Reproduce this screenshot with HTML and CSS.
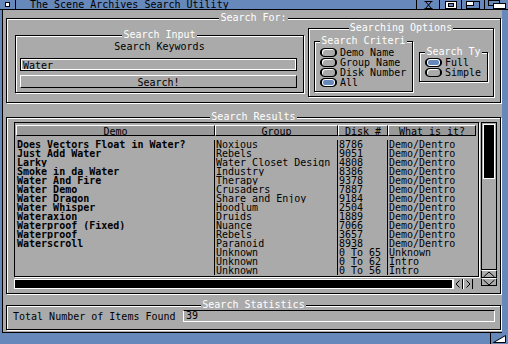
FILE: index.html
```html
<!DOCTYPE html>
<html>
<head>
<meta charset="utf-8">
<link rel="stylesheet" href="styles.css">
</head>
<body>
<div class="win">
  <div class="titlebar">
    <div class="close"><span class="closebox"></span></div>
    <div class="wtitle">The Scene Archives Search Utility</div>
    <div class="gad g1"><svg width="9" height="8" viewBox="0 0 9 8"><path d="M0.5 0.5H8.5M1.5 0.5L7.5 7.5M0.5 7.5H8.5M1.5 7.5L7.5 0.5" stroke="#000" fill="none"/></svg></div>
    <div class="gad g2"><svg width="12" height="8" viewBox="0 0 12 8"><rect x="0.5" y="0.5" width="11" height="7" fill="#fff" stroke="#000"/><rect x="3.5" y="2.5" width="5" height="3" fill="#6688bb" stroke="#000"/></svg></div>
    <div class="gad g3"><svg width="14" height="8" viewBox="0 0 14 8"><rect x="0.5" y="0.5" width="13" height="7" fill="#6688bb" stroke="#000"/><rect x="0.5" y="0.5" width="7" height="4" fill="#fff" stroke="#000"/></svg></div>
    <div class="gad g4"><svg width="18" height="9" viewBox="0 0 18 9"><rect x="0.5" y="0.5" width="11" height="5" fill="#6688bb" stroke="#000"/><rect x="5.5" y="3.5" width="12" height="5" fill="#fff" stroke="#000"/></svg></div>
  </div>
  <div class="body">
    <div class="content">
      <div class="grp g-for">
        <div class="ttl">Search For:</div>
        <div class="for-row">
          <div class="grp g-input">
            <div class="ttl">Search Input</div>
            <div class="label">Search Keywords</div>
            <div class="string">Water</div>
            <div class="button"><u>S</u>earch!</div>
          </div>
          <div class="grp g-opts">
            <div class="ttl">Searching Options</div>
            <div class="opts-row">
              <div class="grp g-crit">
                <div class="ttl">Search Criteri</div>
                <div class="radios">
                  <div class="ritem"><span class="radio"></span>Demo Name</div>
                  <div class="ritem"><span class="radio"></span>Group Name</div>
                  <div class="ritem"><span class="radio"></span>Disk Number</div>
                  <div class="ritem"><span class="radio on"></span>All</div>
                </div>
              </div>
              <div class="grp g-type">
                <div class="ttl">Search Ty</div>
                <div class="radios">
                  <div class="ritem"><span class="radio on"></span>Full</div>
                  <div class="ritem"><span class="radio"></span>Simple</div>
                </div>
              </div>
            </div>
          </div>
        </div>
      </div>

      <div class="grp g-res">
        <div class="ttl">Search Results</div>
        <div class="listwrap">
          <div class="listmain">
            <div class="lv">
              <div class="row hdr">
                <div class="c c1">Demo</div><div class="c c2">Group</div><div class="c c3">Disk #</div><div class="c c4">What is it?</div>
              </div>
              <div class="rows">
                <div class="row"><div class="c c1 b">Does Vectors Float in Water?</div><div class="c c2">Noxious</div><div class="c c3">8786</div><div class="c c4">Demo/Dentro</div></div>
                <div class="row"><div class="c c1 b">Just Add Water</div><div class="c c2">Rebels</div><div class="c c3">9051</div><div class="c c4">Demo/Dentro</div></div>
                <div class="row"><div class="c c1 b">Larky</div><div class="c c2">Water Closet Design</div><div class="c c3">4808</div><div class="c c4">Demo/Dentro</div></div>
                <div class="row"><div class="c c1 b">Smoke in da Water</div><div class="c c2">Industry</div><div class="c c3">8386</div><div class="c c4">Demo/Dentro</div></div>
                <div class="row"><div class="c c1 b">Water And Fire</div><div class="c c2">Therapy</div><div class="c c3">9378</div><div class="c c4">Demo/Dentro</div></div>
                <div class="row"><div class="c c1 b">Water Demo</div><div class="c c2">Crusaders</div><div class="c c3">7887</div><div class="c c4">Demo/Dentro</div></div>
                <div class="row"><div class="c c1 b">Water Dragon</div><div class="c c2">Share and Enjoy</div><div class="c c3">9184</div><div class="c c4">Demo/Dentro</div></div>
                <div class="row"><div class="c c1 b">Water Whisper</div><div class="c c2">Hoodlum</div><div class="c c3">2504</div><div class="c c4">Demo/Dentro</div></div>
                <div class="row"><div class="c c1 b">Wateraxion</div><div class="c c2">Druids</div><div class="c c3">1889</div><div class="c c4">Demo/Dentro</div></div>
                <div class="row"><div class="c c1 b">Waterproof (Fixed)</div><div class="c c2">Nuance</div><div class="c c3">7066</div><div class="c c4">Demo/Dentro</div></div>
                <div class="row"><div class="c c1 b">Waterproof</div><div class="c c2">Rebels</div><div class="c c3">3657</div><div class="c c4">Demo/Dentro</div></div>
                <div class="row"><div class="c c1 b">Waterscroll</div><div class="c c2">Paranoid</div><div class="c c3">8938</div><div class="c c4">Demo/Dentro</div></div>
                <div class="row"><div class="c c1 b"></div><div class="c c2">Unknown</div><div class="c c3">0 To 65</div><div class="c c4">Unknown</div></div>
                <div class="row"><div class="c c1 b"></div><div class="c c2">Unknown</div><div class="c c3">0 To 62</div><div class="c c4">Intro</div></div>
                <div class="row"><div class="c c1 b"></div><div class="c c2">Unknown</div><div class="c c3">0 To 56</div><div class="c c4">Intro</div></div>
              </div>
            </div>
            <div class="hscroll">
              <div class="hbar"></div>
              <div class="arrbtn"><svg width="8" height="8" viewBox="0 0 8 8"><path d="M5.5 0.5L2 4L5.5 7.5" stroke="#000" fill="none"/></svg></div>
              <div class="arrbtn"><svg width="8" height="8" viewBox="0 0 8 8"><path d="M2.5 0.5L6 4L2.5 7.5" stroke="#000" fill="none"/></svg></div>
            </div>
          </div>
          <div class="vside">
            <div class="vscroll"><div class="vknob"></div></div>
            <div class="varr"><svg width="12" height="7" viewBox="0 0 12 7"><path d="M0.5 6L6 1L11.5 6" stroke="#000" fill="none"/></svg></div>
            <div class="varr"><svg width="12" height="7" viewBox="0 0 12 7"><path d="M0.5 1L6 6L11.5 1" stroke="#000" fill="none"/></svg></div>
          </div>
        </div>
      </div>

      <div class="grp g-stat">
        <div class="ttl">Search Statistics</div>
        <div class="stat-row">
          <div class="stat-label">Total Number of Items Found</div>
          <div class="stat-val">39</div>
        </div>
      </div>
    </div>
  </div>
  <div class="bottombar">
    <div class="sizer"><svg width="13" height="8" viewBox="0 0 13 8"><path d="M0.5 7.5H12.5V0.5Z" fill="#fff" stroke="#000"/></svg></div>
  </div>
</div>
</body>
</html>
```

FILE: styles.css
```css
* { box-sizing: border-box; margin: 0; padding: 0; }
html, body { width: 508px; height: 344px; overflow: hidden; }
body {
  font-family: "DejaVu Sans Mono", "Liberation Mono", monospace;
  font-size: 10px;
  line-height: 9px;
  color: #000;
  background: #6688bb;
}
.win { width: 508px; height: 344px; display: flex; flex-direction: column; background: #6688bb; }

/* title bar */
.titlebar { height: 10px; display: flex; border-bottom: 1px solid #000; }
.close { width: 16px; border-right: 1px solid #000; display: flex; align-items: center; justify-content: center; }
.closebox { width: 5px; height: 5px; border: 1px solid #000; background: #fff; }
.wtitle { flex: 1; padding: 1px 0 0 14px; line-height: 8px; white-space: nowrap; }
.gad { border-left: 1px solid #000; display: flex; align-items: center; justify-content: center; }
.g1 { width: 23px; }
.g2 { width: 22px; }
.g3 { width: 23px; }
.g4 { width: 24px; }

/* body */
.body { flex: 1; display: flex; padding: 0 6px 0 2px; }
.content {
  flex: 1;
  background: #aaaaaa;
  border-left: 1px solid #000;
  border-bottom: 1px solid #000;
  padding: 8px 0 0 3px;
}
.bottombar { height: 11px; display: flex; justify-content: flex-end; }
.sizer { width: 18px; border-left: 1px solid #000; display: flex; align-items: center; justify-content: center; }

/* etched group frame */
.grp {
  border: 1px solid #000;
  box-shadow: inset 1px 1px 0 #fff, 1px 1px 0 #fff;
}
.ttl {
  display: table;
  margin: -6px auto 0;
  padding: 0 1px;
  background: #aaaaaa;
  color: #fff;
  line-height: 9px;
  white-space: nowrap;
}

.g-for { width: 495px; height: 85px; }
.for-row { display: flex; align-items: flex-start; padding-left: 8px; }
.g-input { width: 289px; height: 58px; margin-top: 13px; }
.g-opts { width: 186px; height: 69px; margin-top: 6px; margin-left: 4px; }

.label { text-align: center; margin-top: 3px; }
.string {
  width: 277px; height: 13px; margin: 7px 0 0 4px;
  border: 1px solid #000;
  outline: 1px solid #fff;
  outline-offset: -2px;
  padding: 2px 0 0 2px;
}
.button {
  width: 277px; height: 13px; margin: 4px 0 0 4px;
  border-top: 1px solid #fff; border-left: 1px solid #fff;
  border-bottom: 1px solid #000; border-right: 1px solid #000;
  text-align: center; padding-top: 2px;
}
.button u { text-decoration-thickness: 1px; text-underline-offset: 1px; }

.opts-row { display: flex; align-items: flex-start; padding-left: 5px; }
.g-crit { width: 99px; height: 51px; margin-top: 9px; }
.g-type { width: 69px; height: 30px; margin-top: 20px; margin-left: 6px; }
.radios { padding-left: 5px; }
.g-crit .radios { margin-top: 2px; }
.g-type .radios { margin-top: 1px; }
.ritem { display: flex; align-items: center; height: 10px; white-space: nowrap; }
.radio {
  width: 17px; height: 9px; margin-right: 3px; flex: none;
  border: 1px solid #000; border-left-width: 2px; border-right-width: 2px;
  border-radius: 5px / 4px;
  box-shadow: inset 1px 1px 0 #fff;
}
.radio.on { background: #6688bb; box-shadow: inset 0 0 0 1px #fff; }

/* results */
.g-res { width: 495px; height: 177px; margin-top: 14px; }
.listwrap { display: flex; padding: 1px 0 0 7px; }
.listmain { width: 465px; }
.lv { border: 1px solid #000; box-shadow: 1px 1px 0 #fff; height: 155px; padding: 2px 0 0 1px; }
.row { display: flex; height: 9px; white-space: nowrap; }
.c { overflow: hidden; border-right: 1px solid #000; padding-left: 1px; }
.c1 { width: 199px; }
.c2 { width: 123px; }
.c3 { width: 50px; }
.c4 { width: 88px; border-right: none; }
.b { font-weight: bold; }
.hdr { height: 11px; margin-bottom: 4px; }
.hdr .c {
  text-align: center; padding: 1px 0 0;
  background: #999999;
  border-top: 1px solid #fff; border-left: 1px solid #fff;
  border-bottom: 1px solid #000; border-right: 1px solid #000;
}
.hscroll { display: flex; height: 10px; margin-top: 2px; }
.hbar { width: 439px; background: #000; border: 1px solid #fff; }
.arrbtn { width: 10px; display: flex; align-items: center; justify-content: center; border-right: 1px solid #000; border-left: 1px solid #fff; }

.vside { width: 16px; margin-left: 2px; display: flex; flex-direction: column; }
.vscroll { height: 148px; border: 1px solid #000; padding: 1px; }
.vknob { height: 55px; background: #000; border: 1px solid #fff; }
.varr { height: 8px; display: flex; align-items: center; justify-content: center; border: 1px solid #000; border-top-color: #fff; }

/* statistics */
.g-stat { width: 495px; height: 25px; margin-top: 11px; }
.stat-row { display: flex; align-items: center; padding: 0 0 0 6px; margin-top: 1px; }
.stat-label { width: 170px; }
.stat-val {
  width: 312px; height: 12px; padding-left: 2px;
  border-top: 1px solid #000; border-left: 1px solid #fff;
  border-bottom: 1px solid #fff; border-right: 1px solid #fff;
  line-height: 10px;
}
```
